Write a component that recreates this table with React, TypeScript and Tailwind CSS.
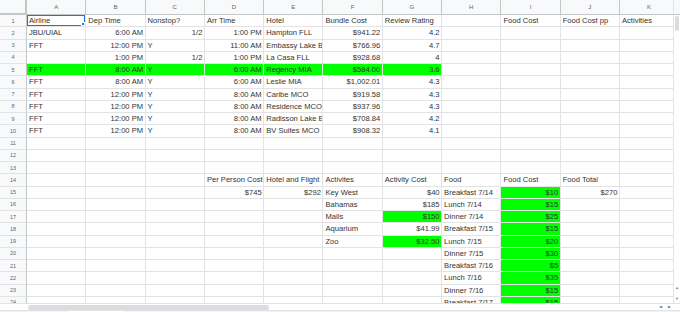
import React from "react";

const COLS = ["A", "B", "C", "D", "E", "F", "G", "H", "I", "J", "K"];

// sheet contents, one array per row (A..K)
const ROWS: string[][] = [
  ["Airline", "Dep Time", "Nonstop?", "Arr Time", "Hotel", "Bundle Cost", "Review Rating", "", "Food Cost", "Food Cost pp", "Activities"],
  ["JBU/UIAL", "6:00 AM", "1/2", "1:00 PM", "Hampton FLL", "$941.22", "4.2", "", "", "", ""],
  ["FFT", "12:00 PM", "Y", "11:00 AM", "Embassy Lake B", "$766.96", "4.7", "", "", "", ""],
  ["", "1:00 PM", "1/2", "1:00 PM", "La Casa FLL", "$928.68", "4", "", "", "", ""],
  ["FFT", "8:00 AM", "Y", "6:00 AM", "Regency MIA", "$584.00", "3.6", "", "", "", ""],
  ["FFT", "8:00 AM", "Y", "6:00 AM", "Leslie MIA", "$1,002.01", "4.3", "", "", "", ""],
  ["FFT", "12:00 PM", "Y", "8:00 AM", "Caribe MCO", "$919.58", "4.3", "", "", "", ""],
  ["FFT", "12:00 PM", "Y", "8:00 AM", "Residence MCO", "$937.96", "4.3", "", "", "", ""],
  ["FFT", "12:00 PM", "Y", "8:00 AM", "Radisson Lake B", "$708.84", "4.2", "", "", "", ""],
  ["FFT", "12:00 PM", "Y", "8:00 AM", "BV Suites MCO", "$908.32", "4.1", "", "", "", ""],
  ["", "", "", "", "", "", "", "", "", "", ""],
  ["", "", "", "", "", "", "", "", "", "", ""],
  ["", "", "", "", "", "", "", "", "", "", ""],
  ["", "", "", "Per Person Cost", "Hotel and Flight", "Activites", "Activity Cost", "Food", "Food Cost", "Food Total", ""],
  ["", "", "", "$745", "$292", "Key West", "$40", "Breakfast 7/14", "$10", "$270", ""],
  ["", "", "", "", "", "Bahamas", "$185", "Lunch 7/14", "$15", "", ""],
  ["", "", "", "", "", "Malls", "$150", "Dinner 7/14", "$25", "", ""],
  ["", "", "", "", "", "Aquarium", "$41.99", "Breakfast 7/15", "$15", "", ""],
  ["", "", "", "", "", "Zoo", "$32.50", "Lunch 7/15", "$20", "", ""],
  ["", "", "", "", "", "", "", "Dinner 7/15", "$30", "", ""],
  ["", "", "", "", "", "", "", "Breakfast 7/16", "$5", "", ""],
  ["", "", "", "", "", "", "", "Lunch 7/16", "$35", "", ""],
  ["", "", "", "", "", "", "", "Dinner 7/16", "$15", "", ""],
  ["", "", "", "", "", "", "", "Breakfast 7/17", "$15", "", ""],
];

const isGreen = (r: number, c: number) =>
  (r === 5 && c <= 6) ||
  (r >= 15 && c === 8) ||
  ((r === 17 || r === 19) && c === 6);

const Cell: React.FC<{ value: string; row: number; col: number }> = ({ value, row, col }) => {
  const right = /^[\d$]/.test(value);
  const green = isGreen(row, col);
  const selected = row === 1 && col === 0;
  return (
    <div
      className={`relative flex items-end pb-[1.5px] overflow-hidden whitespace-nowrap border-r border-b border-[#e3e3e3] text-[7.6px] leading-none text-[#333] ${
        right ? "justify-end pr-[1.5px]" : "justify-start pl-[2px]"
      } ${green ? "bg-[#00ff00]" : "bg-white"}`}
    >
      {value}
      {selected && (
        <>
          <div className="absolute inset-0 border-[1.5px] border-[#1a73e8]" />
          <div className="absolute right-0 bottom-0 w-[4px] h-[4px] bg-[#1a73e8] border border-white" />
        </>
      )}
    </div>
  );
};

export default function App() {
  return (
    <div
      className="w-[680px] h-[312px] overflow-hidden bg-white flex flex-col"
      style={{ fontFamily: '"Liberation Sans", Arial, sans-serif' }}
    >
      <div className="flex h-[303px]">
        <div className="w-[673px] h-[303px] overflow-hidden">
          <div className="grid grid-cols-[27px_repeat(11,59.3px)] grid-rows-[15px_repeat(24,12.25px)]">
            {/* corner */}
            <div className="bg-[#f8f9fa] border-r-2 border-b-2 border-[#c4c7c5]" />
            {COLS.map((c) => (
              <div
                key={c}
                className="flex items-center justify-center bg-[#f8f9fa] border-r border-b border-[#c4c7c5] text-[6px] text-[#5f6368]"
              >
                {c}
              </div>
            ))}
            {ROWS.map((row, ri) => (
              <React.Fragment key={ri}>
                <div className="flex items-center justify-center bg-[#f8f9fa] border-r border-b border-[#c4c7c5] border-b-[#e3e3e3] text-[5.5px] text-[#5f6368]">
                  {ri + 1}
                </div>
                {row.map((v, ci) => (
                  <Cell key={ci} value={v} row={ri + 1} col={ci} />
                ))}
              </React.Fragment>
            ))}
          </div>
        </div>
        {/* vertical scrollbar */}
        <div className="w-[7px] border-l border-[#e3e3e3] bg-white flex flex-col items-center">
          <div className="h-[15px] w-full bg-[#f8f9fa] border-b border-[#c4c7c5]" />
          <div className="w-[4px] h-[15px] mt-[1px] rounded-full bg-[#dadce0]" />
          <div className="flex-1" />
          <div className="text-[4px] leading-none text-[#80868b] mb-[7px]">▲</div>
          <div className="text-[4px] leading-none text-[#80868b] mb-[2px]">▼</div>
        </div>
      </div>
      {/* horizontal scrollbar */}
      <div className="h-[7px] flex items-center border-t border-[#e3e3e3] bg-white">
        <div className="w-[28px]" />
        <div className="w-[241px] h-[5px] rounded-full bg-[#dadce0]" />
        <div className="flex-1" />
        <div className="text-[4px] leading-none text-[#80868b] mr-[6px]">◀</div>
        <div className="text-[4px] leading-none text-[#80868b] mr-[9px]">▶</div>
      </div>
      {/* sheet tabs strip */}
      <div className="flex-1 flex bg-[#f1f3f4] border-t border-[#e3e3e3]">
        <div className="ml-[68px] w-[56px] bg-white" />
      </div>
    </div>
  );
}
